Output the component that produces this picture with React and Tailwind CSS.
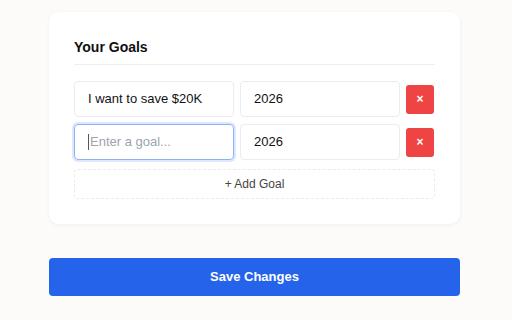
import React from "react";

function GoalRow({ goal, year, focused }) {
  return (
    <div className="flex items-center gap-[6px]">
      <div
        className={`w-[160px] h-[36px] rounded-[4px] flex items-center px-[13px] text-[13px] ${
          focused
            ? "border border-[#8fb0f5] shadow-[0_0_0_2px_#dde7fd]"
            : "border border-[#ececec]"
        }`}
      >
        {goal ? (
          <span className="text-[#111]">{goal}</span>
        ) : (
          <span className="flex items-center text-[#9ca3af]">
            <span className="w-px h-[16px] bg-[#555] mr-[1px]"></span>
            Enter a goal...
          </span>
        )}
      </div>
      <div className="w-[160px] h-[36px] rounded-[4px] border border-[#ececec] flex items-center px-[13px] text-[13px] text-[#111]">
        {year}
      </div>
      <button className="w-[28px] h-[29px] rounded-[3px] bg-[#ef4444] text-white flex items-center justify-center text-[12px] font-bold">
        ×
      </button>
    </div>
  );
}

export default function App() {
  return (
    <div
      className="w-[512px] h-[320px] bg-[#fcfbfa] pt-[12px] pl-[49px]"
      style={{ fontFamily: "'Liberation Sans', Arial, sans-serif" }}
    >
      <div className="w-[411px] bg-white rounded-[10px] shadow-[0_1px_4px_rgba(0,0,0,0.05)] px-[25px] pt-[26px] pb-[25px]">
        <h2 className="text-[14px] font-bold text-[#111] leading-[18px]">Your Goals</h2>
        <div className="h-px bg-[#eeeeee] mt-[8px] mb-[16px]"></div>
        <div className="flex flex-col gap-[7px]">
          <GoalRow goal="I want to save $20K" year="2026" />
          <GoalRow goal="" year="2026" focused />
        </div>
        <button className="mt-[9px] w-full h-[30px] rounded-[4px] border border-dashed border-[#ebebeb] text-[12px] text-[#444] flex items-center justify-center">
          + Add Goal
        </button>
      </div>
      <button className="mt-[34px] w-[411px] h-[38px] rounded-[4px] bg-[#2563eb] text-white text-[13px] font-bold flex items-center justify-center">
        Save Changes
      </button>
    </div>
  );
}
